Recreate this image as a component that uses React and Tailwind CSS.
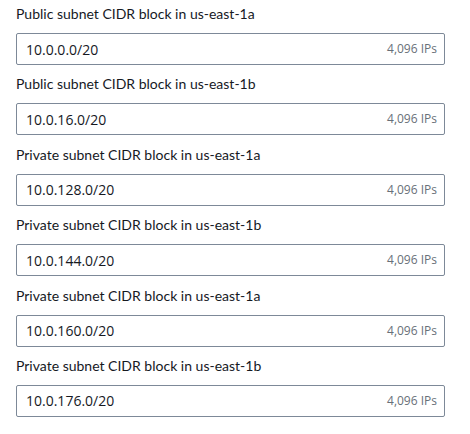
export default function App() {
  const rows = [
    ["Public subnet CIDR block in us-east-1a", "10.0.0.0/20"],
    ["Public subnet CIDR block in us-east-1b", "10.0.16.0/20"],
    ["Private subnet CIDR block in us-east-1a", "10.0.128.0/20"],
    ["Private subnet CIDR block in us-east-1b", "10.0.144.0/20"],
    ["Private subnet CIDR block in us-east-1a", "10.0.160.0/20"],
    ["Private subnet CIDR block in us-east-1b", "10.0.176.0/20"],
  ];
  return (
    <div className="w-[470px] h-[434px] bg-white pl-4 pt-[3px] flex flex-col gap-[8.4px]">
      {rows.map(([label, value], i) => (
        <div key={i} className="flex flex-col gap-[8px] w-[429px]">
          <div className="text-[14px] leading-[22px] text-[#16191f] font-['Lato',sans-serif]">{label}</div>
          <div className="h-[32px] border border-[#7d8998] rounded-[2px] flex items-center justify-between pl-[9px] pr-[7px] font-['Open_Sans',sans-serif]">
            <span className="text-[14px] text-[#16191f]">{value}</span>
            <span className="text-[12px] text-[#687078]">4,096 IPs</span>
          </div>
        </div>
      ))}
    </div>
  );
}
